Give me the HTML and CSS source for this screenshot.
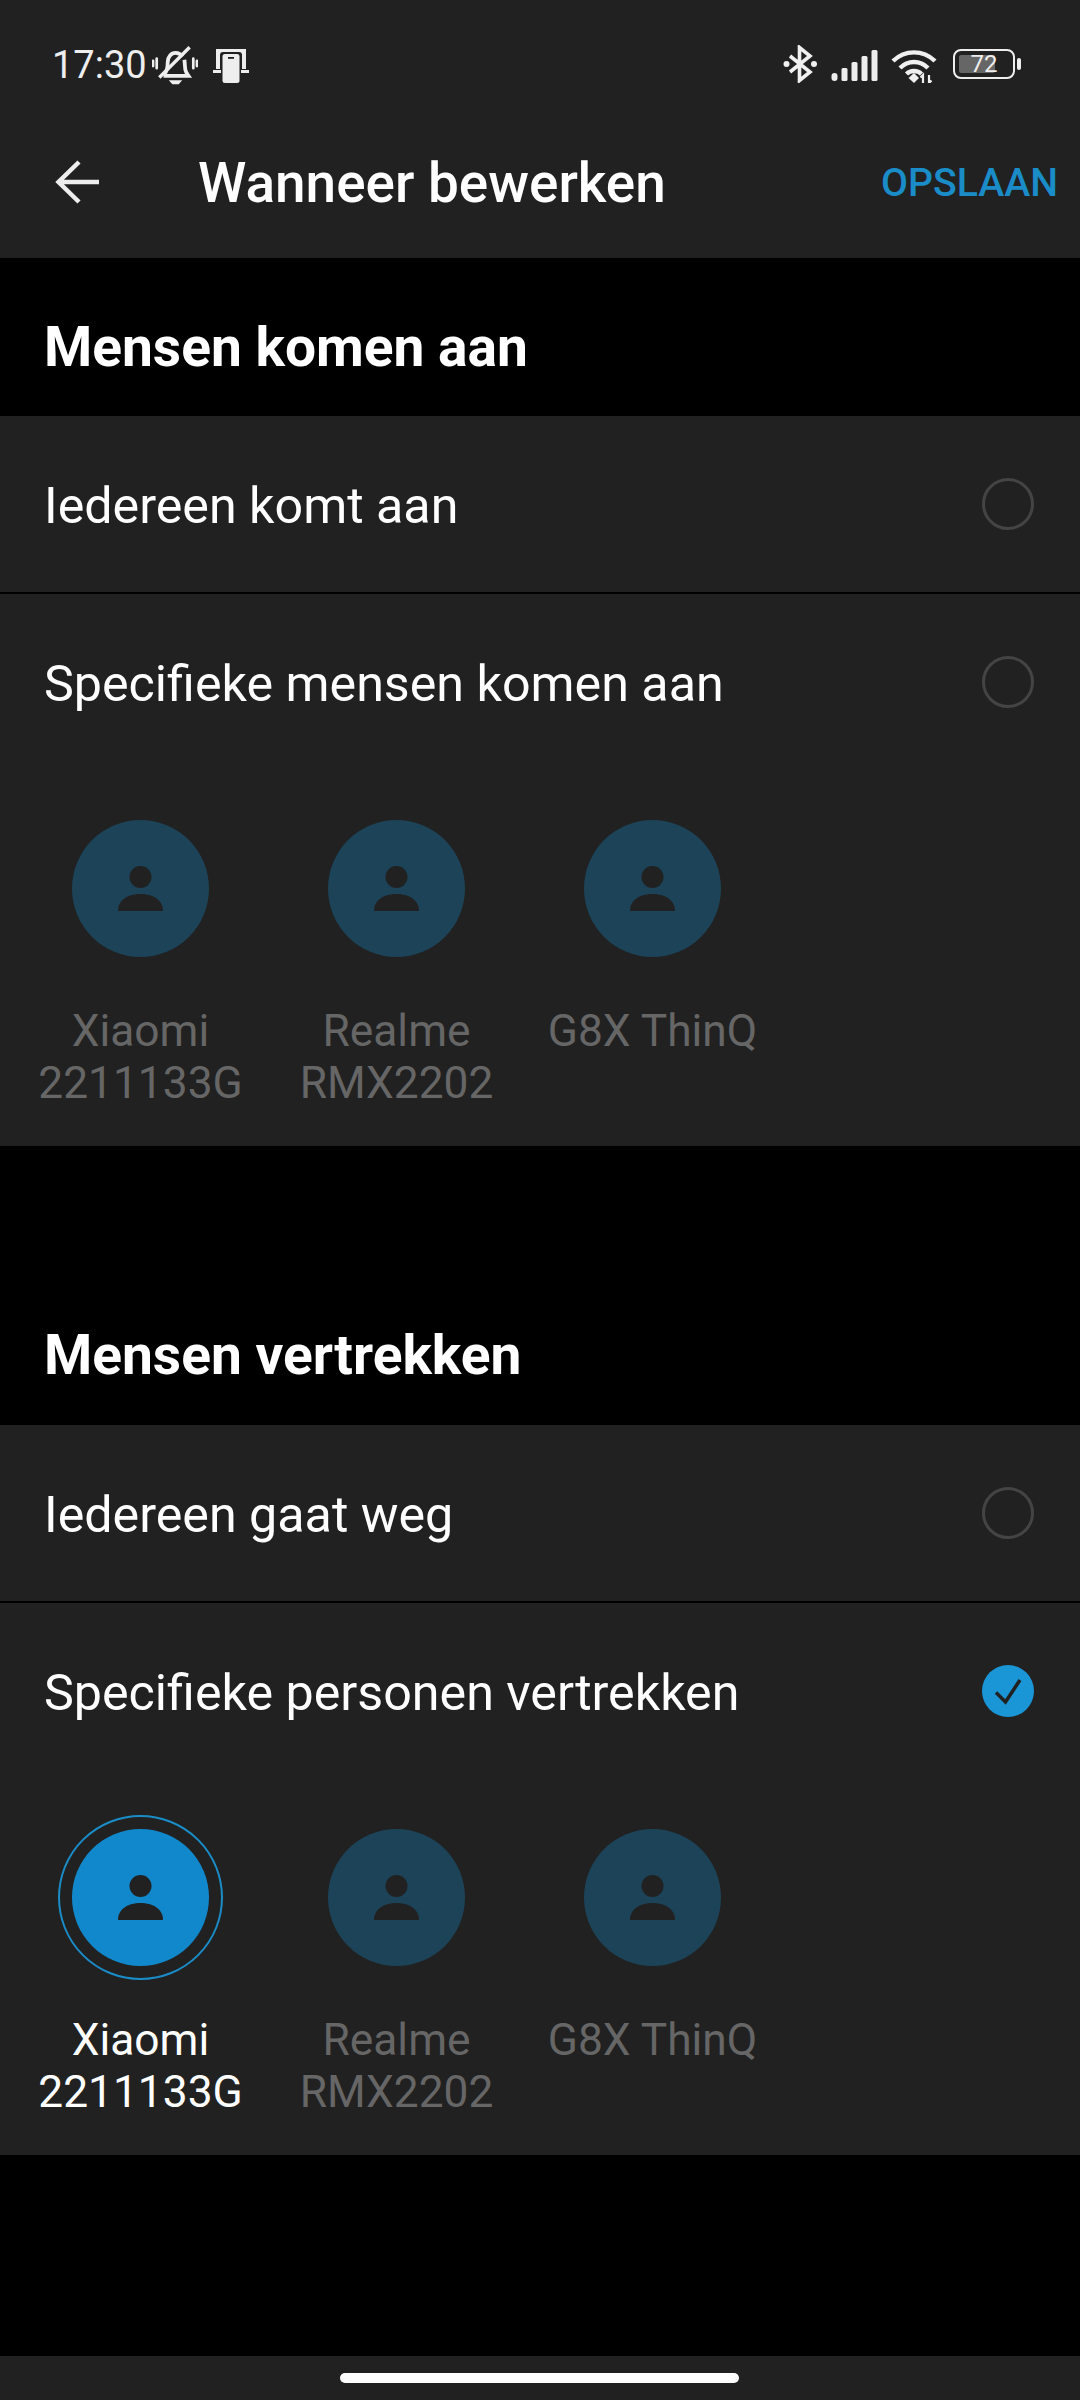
FILE: index.html
```html
<!DOCTYPE html>
<html lang="nl">
<head>
<meta charset="utf-8">
<title>Wanneer bewerken</title>
<link rel="stylesheet" href="styles.css">
</head>
<body>
<svg class="defs" width="0" height="0" aria-hidden="true">
  <symbol id="person" viewBox="0 0 137 137">
    <circle cx="68.5" cy="57" r="11"/>
    <path d="M46 91c0-11 10-17 22.500-17S91 80 91 91z"/>
  </symbol>
</svg>
<div class="screen">
  <header class="top">
    <div class="status">
      <div class="status-left">
        <span class="time">17:30</span>
        <svg class="ic-bell" width="46" height="40" viewBox="0 0 44 38" fill="none" stroke="#eee">
          <path d="M12 27.500c2.500-3 3-6 3-11 0-5.500 3.500-9 7.500-9 2.500 0 5 1 6.500 3.500M31 14c.5 4 .5 8 1 10 .5 2.500 2 4 3 5.500H11" stroke-width="3.600"/>
          <path d="M16 33.500h13l-3.500 4h-6z" fill="#eee" stroke="none"/>
          <path d="M4.500 13v9M1 15v5M39.500 13v9M43 15v5" stroke-width="2.600" stroke-linecap="round"/>
          <path d="M7 31 36 2" stroke-width="3.200"/>
        </svg>
        <svg class="ic-phone" width="36" height="34" viewBox="0 0 36 34" fill="#eee">
          <path d="M3 0h30v20h-4V6c0-2-1-3-3-3H10C8 3 7 4 7 6v14H3z"/>
          <rect x="9.500" y="5" width="17" height="29" rx="2.500"/>
          <rect x="0" y="21" width="8" height="3"/>
          <rect x="28" y="21" width="8" height="3"/>
          <rect x="15" y="8" width="6" height="1.800" fill="#212121"/>
        </svg>
      </div>
      <div class="status-right">
        <svg class="ic-bt" width="35" height="38" viewBox="0 0 35 38" fill="none" stroke="#f0f0f0" stroke-width="3.600">
          <path d="M7 11 27 27 16.500 35.500V2.500L27 11 7 27"/>
          <circle cx="3.500" cy="19" r="3" fill="#f0f0f0" stroke="none"/>
          <circle cx="31" cy="19" r="3" fill="#f0f0f0" stroke="none"/>
        </svg>
        <svg class="ic-signal" width="47" height="31" viewBox="0 0 46 31" fill="#eee">
          <rect x="0" y="23" width="6" height="8" rx="3"/>
          <rect x="10" y="18" width="6" height="13" rx="1.500"/>
          <rect x="20" y="12" width="6" height="19" rx="1.500"/>
          <rect x="30" y="6" width="6" height="25" rx="1.500"/>
          <rect x="40" y="0" width="6" height="31" rx="1.500"/>
        </svg>
        <svg class="ic-wifi" width="46" height="35" viewBox="0 0 46 35" fill="none" stroke="#f0f0f0" stroke-width="4.400">
          <path d="M2 13C14 1.500 32 1.500 44 13"/>
          <path d="M9 20C17 12 29 12 37 20"/>
          <path d="M15.500 26C19.500 22 26.500 22 30.500 26"/>
          <path d="M17.500 30 23 25l5 5-5 5z" fill="#f0f0f0" stroke="none"/>
          <path d="M32 35v-8l-2.500 2.500M38 27v8l2.500-2.500" stroke="#f0f0f0" stroke-width="2.200"/>
        </svg>
        <div class="battery">
          <div class="battery-body">
            <div class="battery-fill"></div>
            <span class="battery-text">72</span>
          </div>
          <div class="battery-nub"></div>
        </div>
      </div>
    </div>
    <div class="appbar">
      <svg class="ic-back" width="44" height="44" viewBox="0 0 44 44" fill="none" stroke="#eee" stroke-width="4.500">
        <path d="M44 22H3M24 2 3.500 22 24 42"/>
      </svg>
      <h1 class="title">Wanneer bewerken</h1>
      <span class="save">OPSLAAN</span>
    </div>
  </header>

  <h2 class="section-title first">Mensen komen aan</h2>
  <section class="card">
    <div class="row">
      <span class="row-label">Iedereen komt aan</span>
      <span class="radio"></span>
    </div>
    <div class="row ruled">
      <span class="row-label">Specifieke mensen komen aan</span>
      <span class="radio"></span>
    </div>
    <div class="people">
      <div class="person">
        <div class="avatar"><svg class="person-ic"><use href="#person"/></svg></div>
        <div class="person-name">Xiaomi<br>2211133G</div>
      </div>
      <div class="person">
        <div class="avatar"><svg class="person-ic"><use href="#person"/></svg></div>
        <div class="person-name">Realme<br>RMX2202</div>
      </div>
      <div class="person">
        <div class="avatar"><svg class="person-ic"><use href="#person"/></svg></div>
        <div class="person-name">G8X ThinQ</div>
      </div>
    </div>
  </section>

  <h2 class="section-title second">Mensen vertrekken</h2>
  <section class="card">
    <div class="row">
      <span class="row-label">Iedereen gaat weg</span>
      <span class="radio"></span>
    </div>
    <div class="row ruled">
      <span class="row-label">Specifieke personen vertrekken</span>
      <span class="radio checked">
        <svg width="52" height="52" viewBox="0 0 52 52" fill="none" stroke="#212121" stroke-width="3.500">
          <path d="M14 27.500 23.500 37 38 15"/>
        </svg>
      </span>
    </div>
    <div class="people">
      <div class="person selected">
        <div class="avatar"><svg class="person-ic"><use href="#person"/></svg></div>
        <div class="person-name">Xiaomi<br>2211133G</div>
      </div>
      <div class="person">
        <div class="avatar"><svg class="person-ic"><use href="#person"/></svg></div>
        <div class="person-name">Realme<br>RMX2202</div>
      </div>
      <div class="person">
        <div class="avatar"><svg class="person-ic"><use href="#person"/></svg></div>
        <div class="person-name">G8X ThinQ</div>
      </div>
    </div>
  </section>

  <div class="spacer"></div>
  <footer class="navbar"><div class="home-bar"></div></footer>
</div>
</body>
</html>
```

FILE: styles.css
```css
* { box-sizing: border-box; }
html, body { margin: 0; padding: 0; background: #000; }
body { font-family: Roboto, "Noto Sans", sans-serif; color: #fff; }
.defs { position: absolute; }
.screen { width: 1080px; height: 2400px; display: flex; flex-direction: column; background: #000; }

.top { height: 258px; background: #212121; flex: none; }
.status { height: 96px; padding: 45px 59px 0 52px; display: flex; justify-content: space-between; align-items: flex-start; }
.status-left, .status-right { display: flex; align-items: flex-start; }
.time { font-size: 38px; line-height: 40px; color: #eee; width: 100px; }
.ic-bell { margin-top: 0; }
.ic-phone { margin: 4px 0 0 15px; }
.ic-bt { margin-top: 0; }
.ic-signal { margin: 5px 0 0 13px; }
.ic-wifi { margin: 3px 0 0 13px; }
.battery { display: flex; align-items: center; margin: 4px 0 0 16px; }
.battery-body { position: relative; width: 62px; height: 30px; border: 2.500px solid #eee; border-radius: 8px; display: flex; align-items: center; justify-content: center; overflow: hidden; }
.battery-fill { position: absolute; left: 4px; top: 4px; bottom: 4px; width: 36px; background: #666; border-radius: 2px; }
.battery-text { position: relative; font-size: 24px; line-height: 26px; color: #eee; }
.battery-nub { width: 4px; height: 12px; margin-left: 2px; background: #eee; border-radius: 2px; }

.appbar { height: 162px; display: flex; align-items: flex-start; padding: 64px 22px 0 55px; }
.ic-back { flex: none; }
.title { margin: -9px 0 0 99px; font-size: 54.900px; line-height: 64px; font-weight: 500; color: #fff; flex: 1; }
.save { font-size: 39.200px; line-height: 46px; font-weight: 500; color: #1a8cc8; }

.section-title { margin: 0; font-size: 55.100px; line-height: 60px; font-weight: 700; color: #fff; padding-left: 44px; flex: none; }
.section-title.first { height: 158px; padding-top: 59px; }
.section-title.second { height: 279px; padding-top: 179px; }

.card { background: #212121; flex: none; }
.row { height: 176px; display: flex; align-items: center; justify-content: space-between; padding: 0 46px 0 44px; }
.row.ruled { height: 178px; border-top: 2px solid #000; }
.row-label { font-size: 50.200px; line-height: 56px; color: #fff; margin-top: 3px; }
.radio { width: 52px; height: 52px; border: 3px solid #444; border-radius: 50%; flex: none; margin-top: -1px; }
.radio.checked { border: 0; background: #1a96d6; }
.radio.checked svg { display: block; }

.people { display: flex; padding: 50px 0 0 12.500px; height: 376px; }
.person { width: 256px; display: flex; flex-direction: column; align-items: center; }
.avatar { width: 137px; height: 137px; border-radius: 50%; background: #1c4358; position: relative; flex: none; }
.person-ic { display: block; width: 137px; height: 137px; fill: #212121; }
.person-name { margin-top: 48px; font-size: 44.300px; line-height: 52px; text-align: center; color: #666; }
.person.selected .avatar { background: #1188cc; }
.person.selected .avatar::after { content: ""; position: absolute; inset: -14px; border: 2.500px solid #1a8cc8; border-radius: 50%; }
.person.selected .person-name { color: #fff; }

.spacer { flex: 1; }
.navbar { height: 44px; background: #212121; flex: none; padding-top: 17px; display: flex; justify-content: center; }
.home-bar { width: 399px; height: 10px; border-radius: 5px; background: #fff; margin-left: -1px; }
```
